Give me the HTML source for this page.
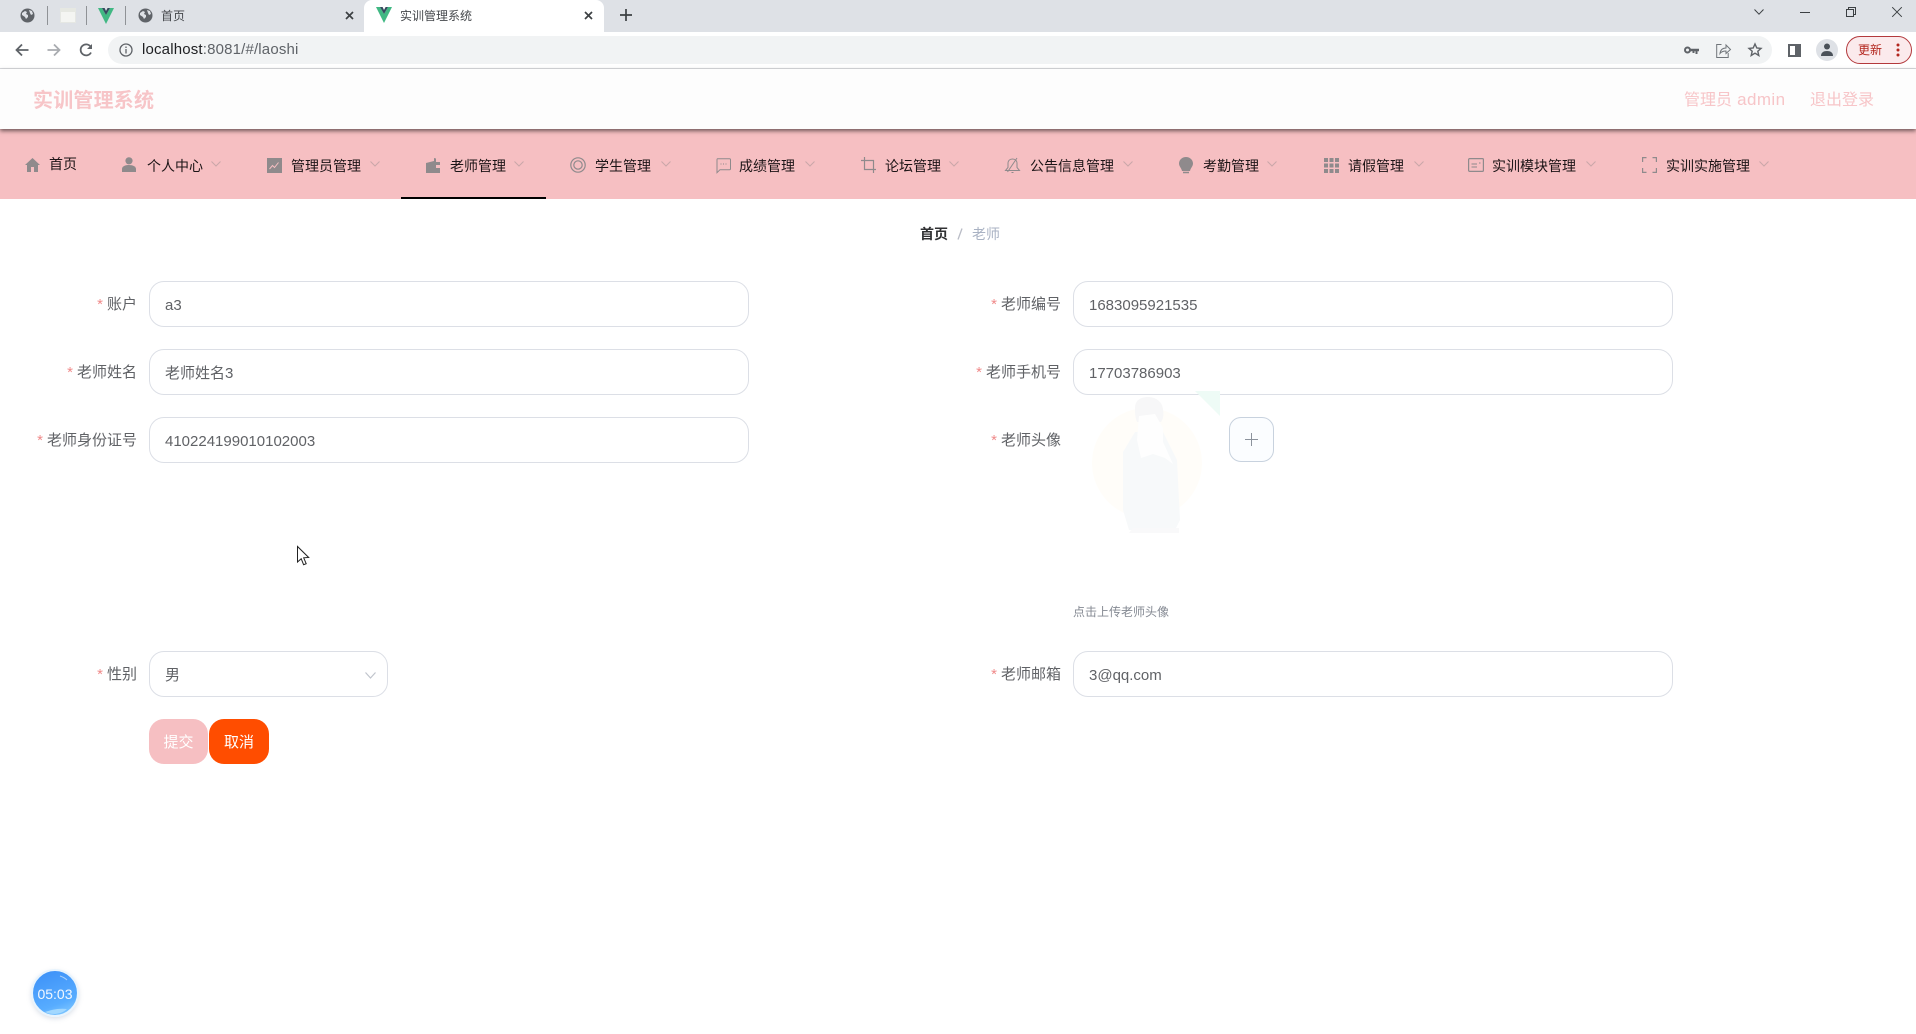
<!DOCTYPE html>
<html lang="zh-CN">
<head>
<meta charset="utf-8">
<title>实训管理系统</title>
<style>
*{box-sizing:border-box;margin:0;padding:0}
html,body{width:1916px;height:1034px;overflow:hidden;background:#fff}
body{position:relative;font-family:"Liberation Sans","Noto Sans CJK SC",sans-serif;font-size:14px;color:#606266}
.a{position:absolute;white-space:nowrap}
svg{position:absolute;display:block;overflow:visible}
.navt{position:absolute;top:155px;line-height:22px;font-size:14px;color:#1c1416;white-space:nowrap}
.lab{position:absolute;right:1779px;line-height:22px;white-space:nowrap;color:#606266;font-size:15px}
.lab2{position:absolute;right:855px;line-height:22px;white-space:nowrap;color:#606266;font-size:15px}
.lab i,.lab2 i{font-style:normal;color:#f08a8a;margin-right:4px}
.inp{position:absolute;height:46px;border:1px solid #dcdfe6;border-radius:15px;background:#fff;line-height:45px;padding:1px 0 0 15px;color:#606266;font-size:15px;white-space:nowrap}
</style>
</head>
<body>
<!-- browser chrome -->
<div class="a" style="left:0;top:0;width:1916px;height:32px;background:#dee1e6"></div>
<div class="a" style="left:0;top:32px;width:1916px;height:36px;background:#fff"></div>
<div class="a" style="left:0;top:68px;width:1916px;height:1px;background:#dadce0"></div>
<div class="a" style="left:364px;top:0;width:240px;height:32px;background:#fff;border-radius:8px 8px 0 0"></div>
<div class="a" style="left:47px;top:6px;width:1px;height:19px;background:#8f9296"></div>
<div class="a" style="left:86px;top:6px;width:1px;height:19px;background:#8f9296"></div>
<div class="a" style="left:125px;top:6px;width:1px;height:19px;background:#8f9296"></div>
<svg style="left:20px;top:8px" width="15" height="15" viewBox="0 0 15 15"><circle cx="7.5" cy="7.5" r="7" fill="#5f6368"/><path d="M2 5l3-2 2 1-1 2 2 1v2l-2 2-1-2-3-2zM9 2l3 1 1 3-2 1-1-2z" fill="#dee1e6"/></svg>
<div class="a" style="left:60px;top:8px;width:16px;height:15px;background:#f4f5f2;border:1px solid #e5e7e3;border-top:4px solid #e6e8e2"></div>
<svg style="left:98px;top:8px" width="16" height="16" viewBox="0 0 16 16"><path d="M0 0h4l4 7 4-7h4L8 16z" fill="#41b883"/><path d="M4 0h2.600L8 3l1.600-3H12L8 7z" fill="#35495e"/></svg>
<svg style="left:138px;top:8px" width="15" height="15" viewBox="0 0 15 15"><circle cx="7.5" cy="7.5" r="7" fill="#5f6368"/><path d="M2 5l3-2 2 1-1 2 2 1v2l-2 2-1-2-3-2zM9 2l3 1 1 3-2 1-1-2z" fill="#dee1e6"/></svg>
<div class="a" style="left:161px;top:7px;font-size:12px;line-height:18px;color:#45484c">首页</div>
<svg style="left:345px;top:11px" width="9" height="9" viewBox="0 0 9 9"><path d="M1 1l7 7M8 1L1 8" stroke="#3c4043" stroke-width="1.700" fill="none"/></svg>
<svg style="left:376px;top:7px" width="16" height="16" viewBox="0 0 16 16"><path d="M0 0h4l4 7 4-7h4L8 16z" fill="#41b883"/><path d="M4 0h2.600L8 3l1.600-3H12L8 7z" fill="#35495e"/></svg>
<div class="a" style="left:400px;top:7px;font-size:12px;line-height:18px;color:#45484c">实训管理系统</div>
<svg style="left:584px;top:11px" width="9" height="9" viewBox="0 0 9 9"><path d="M1 1l7 7M8 1L1 8" stroke="#3c4043" stroke-width="1.700" fill="none"/></svg>
<svg style="left:620px;top:9px" width="12" height="12" viewBox="0 0 12 12"><path d="M6 0v12M0 6h12" stroke="#3c4043" stroke-width="1.700" fill="none"/></svg>
<svg style="left:1754px;top:9px" width="10" height="6" viewBox="0 0 10 6"><path d="M.5.500L5 5.200 9.500.500" stroke="#3c4043" fill="none"/></svg>
<div class="a" style="left:1800px;top:12px;width:10px;height:1px;background:#3c4043"></div>
<svg style="left:1846px;top:7px" width="10" height="10" viewBox="0 0 10 10"><path d="M.5 2.500h7v7h-7zM2.500 2.500v-2h7v7h-2" stroke="#3c4043" fill="none"/></svg>
<svg style="left:1892px;top:7px" width="10" height="10" viewBox="0 0 10 10"><path d="M.2.200l9.600 9.600M9.800.200L.2 9.800" stroke="#3c4043" fill="none"/></svg>

<svg style="left:15px;top:43px" width="14" height="14" viewBox="0 0 14 14"><path d="M13.500 7H1.500M7 1.500L1.500 7 7 12.500" stroke="#5f6368" stroke-width="1.800" fill="none"/></svg>
<svg style="left:47px;top:43px" width="14" height="14" viewBox="0 0 14 14"><path d="M.5 7h12M7 1.500L12.500 7 7 12.500" stroke="#a9acb0" stroke-width="1.800" fill="none"/></svg>
<svg style="left:79px;top:43px" width="14" height="14" viewBox="0 0 14 14"><path d="M12 9.500A5.500 5.500 0 1 1 11.500 3.500" stroke="#5f6368" stroke-width="1.800" fill="none"/><path d="M13 1v5H8z" fill="#5f6368"/></svg>
<div class="a" style="left:108px;top:36px;width:1664px;height:28px;border-radius:14px;background:#f1f3f4"></div>
<svg style="left:119px;top:43px" width="14" height="14" viewBox="0 0 14 14"><circle cx="7" cy="7" r="6" stroke="#5f6368" stroke-width="1.300" fill="none"/><path d="M7 6v4.500M7 3.500v1.500" stroke="#5f6368" stroke-width="1.300"/></svg>
<div class="a" style="left:142px;top:40px;font-size:15px;line-height:20px;letter-spacing:.17px;color:#5f6368"><span style="color:#202124">localhost</span>:8081/#/laoshi</div>
<svg style="left:1684px;top:46px" width="15" height="9" viewBox="0 0 15 9"><circle cx="3.500" cy="4" r="2.500" stroke="#5f6368" stroke-width="2" fill="none"/><path d="M6 2.800h9v2.400h-1.500V8h-2V5.200h-1V7H8.500V5.200H6z" fill="#5f6368"/></svg>
<svg style="left:1716px;top:43px" width="15" height="15" viewBox="0 0 15 15"><path d="M5.500 1.500H.7v13h11.500V10" stroke="#70757a" fill="none"/><path d="M4 10.500C4.500 6.500 7 5 10 5V2l4.500 4.500L10 10.500V8c-2.500 0-4.500.5-6 2.500z" stroke="#70757a" fill="none"/></svg>
<svg style="left:1748px;top:43px" width="14" height="14" viewBox="0 0 14 14"><path d="M7 1l1.800 4 4.200.4-3.200 2.800 1 4.300L7 10.200 3.200 12.500l1-4.300L1 5.400 5.200 5z" stroke="#5f6368" stroke-width="1.400" fill="none"/></svg>
<div class="a" style="left:1788px;top:44px;width:13px;height:13px;border:2px solid #5f6368;border-right-width:6px;background:#fff"></div>
<div class="a" style="left:1816px;top:39px;width:22px;height:22px;border-radius:50%;background:#dee1e6"></div>
<svg style="left:1821px;top:43px" width="12" height="13" viewBox="0 0 12 13"><circle cx="6" cy="3.500" r="3" fill="#4a5159"/><path d="M0 13c0-3.500 2.500-5 6-5s6 1.500 6 5z" fill="#4a5159"/></svg>
<div class="a" style="left:1846px;top:36px;width:66px;height:28px;border:1px solid #b3393c;border-radius:14px;background:#fbeaec"></div>
<div class="a" style="left:1858px;top:41px;font-size:12px;line-height:18px;color:#b3261e">更新</div>
<svg style="left:1896px;top:43px" width="4" height="14" viewBox="0 0 4 14"><circle cx="2" cy="2" r="1.500" fill="#b3261e"/><circle cx="2" cy="7" r="1.500" fill="#b3261e"/><circle cx="2" cy="12" r="1.500" fill="#b3261e"/></svg>

<!-- header -->
<div class="a" style="left:0;top:69px;width:1916px;height:60px;background:#fdfdfd;box-shadow:0 2px 4px rgba(40,30,30,.65);z-index:2"></div>
<div class="a" style="left:33px;top:87px;font-size:20px;letter-spacing:.2px;font-weight:700;line-height:28px;color:#f7c5c8;z-index:3">实训管理系统</div>
<div class="a" style="left:1684px;top:88px;font-size:16px;line-height:24px;color:#f7c5c8;z-index:3">管理员<span style="font-size:17px;letter-spacing:.4px"> admin</span></div>
<div class="a" style="left:1810px;top:89px;font-size:16px;line-height:24px;color:#f7c5c8;z-index:3">退出登录</div>

<!-- nav -->
<div class="a" style="left:0;top:129px;width:1916px;height:70px;background:#f6bfc2"></div>
<div class="a" style="left:401px;top:197px;width:145px;height:2px;background:#000"></div>

<svg style="left:25px;top:158px" width="15" height="14" viewBox="0 0 15 14"><path d="M7.500 0L15 7h-2v7H9V9H6v5H2V7H0z" fill="#8f8a8c"/></svg>
<div class="navt" style="left:49px;top:153px">首页</div>

<svg style="left:122px;top:157px" width="14" height="15" viewBox="0 0 14 15"><circle cx="7" cy="3.800" r="3.600" fill="#8f8a8c"/><path d="M0 15v-3c0-2.500 3-4 7-4s7 1.500 7 4v3z" fill="#8f8a8c"/></svg>
<div class="navt" style="left:147px">个人中心</div>
<svg style="left:211px;top:161px" width="10" height="6" viewBox="0 0 10 6"><path d="M.5.500L5 5 9.500.500" stroke="#c9a6a9" fill="none"/></svg>

<svg style="left:267px;top:158px" width="15" height="15" viewBox="0 0 15 15"><rect width="15" height="15" fill="#8f8a8c"/><path d="M2.500 11l3-3.500 2 2 4-5" stroke="#f6bfc2" fill="none"/></svg>
<div class="navt" style="left:291px">管理员管理</div>
<svg style="left:370px;top:161px" width="10" height="6" viewBox="0 0 10 6"><path d="M.5.500L5 5 9.500.500" stroke="#c9a6a9" fill="none"/></svg>

<svg style="left:426px;top:158px" width="14" height="15" viewBox="0 0 14 15"><path d="M0 5l8-2V0l2 .500V4h4v11H0z" fill="#8f8a8c"/><rect x="10" y="7" width="4" height="3" fill="#f6bfc2"/></svg>
<div class="navt" style="left:450px">老师管理</div>
<svg style="left:514px;top:161px" width="10" height="6" viewBox="0 0 10 6"><path d="M.5.500L5 5 9.500.500" stroke="#c9a6a9" fill="none"/></svg>

<svg style="left:570px;top:157px" width="16" height="16" viewBox="0 0 16 16"><circle cx="8" cy="8" r="7.200" stroke="#8f8a8c" stroke-width="1.200" fill="none"/><circle cx="8" cy="8" r="4.200" stroke="#8f8a8c" stroke-width="1.200" fill="none"/></svg>
<div class="navt" style="left:595px">学生管理</div>
<svg style="left:661px;top:161px" width="10" height="6" viewBox="0 0 10 6"><path d="M.5.500L5 5 9.500.500" stroke="#c9a6a9" fill="none"/></svg>

<svg style="left:716px;top:158px" width="15" height="15" viewBox="0 0 15 15"><path d="M1.500.700h12a1 1 0 0 1 1 1v9a1 1 0 0 1-1 1H4l-3 3V1.700a1 1 0 0 1 .5-1z" stroke="#8f8a8c" fill="none"/><path d="M4.500 6h1M7 6h1M9.500 6h1" stroke="#8f8a8c"/></svg>
<div class="navt" style="left:739px">成绩管理</div>
<svg style="left:805px;top:161px" width="10" height="6" viewBox="0 0 10 6"><path d="M.5.500L5 5 9.500.500" stroke="#c9a6a9" fill="none"/></svg>

<svg style="left:861px;top:157px" width="15" height="16" viewBox="0 0 15 16"><path d="M3.500 0v12.500H15M0 3.500h12.500V16" stroke="#8f8a8c" stroke-width="1.200" fill="none"/></svg>
<div class="navt" style="left:885px">论坛管理</div>
<svg style="left:949px;top:161px" width="10" height="6" viewBox="0 0 10 6"><path d="M.5.500L5 5 9.500.500" stroke="#c9a6a9" fill="none"/></svg>

<svg style="left:1005px;top:157px" width="15" height="16" viewBox="0 0 15 16"><path d="M.5 13.500h14l-2.500-3V6.500C12 3.500 10 2 7.500 2S3 3.500 3 6.500v4zM12 1L2.500 15M6.500 15.500h2" stroke="#8f8a8c" fill="none"/></svg>
<div class="navt" style="left:1030px">公告信息管理</div>
<svg style="left:1123px;top:161px" width="10" height="6" viewBox="0 0 10 6"><path d="M.5.500L5 5 9.500.500" stroke="#c9a6a9" fill="none"/></svg>

<svg style="left:1179px;top:157px" width="14" height="17" viewBox="0 0 14 17"><path d="M7 0c4 0 7 3 7 6.500 0 3-2.500 4.500-3 7.500H3C2.500 11 0 9.500 0 6.500 0 3 3 0 7 0z" fill="#8f8a8c"/><path d="M4 15.500h6" stroke="#8f8a8c" stroke-width="1.500"/></svg>
<div class="navt" style="left:1203px">考勤管理</div>
<svg style="left:1267px;top:161px" width="10" height="6" viewBox="0 0 10 6"><path d="M.5.500L5 5 9.500.500" stroke="#c9a6a9" fill="none"/></svg>

<svg style="left:1324px;top:158px" width="15" height="15" viewBox="0 0 15 15" fill="#8f8a8c"><path d="M0 0h4v4H0zM5.500 0h4v4h-4zM11 0h4v4h-4zM0 5.500h4v4H0zM5.500 5.500h4v4h-4zM11 5.500h4v4h-4zM0 11h4v4H0zM5.500 11h4v4h-4zM11 11h4v4h-4z"/></svg>
<div class="navt" style="left:1348px">请假管理</div>
<svg style="left:1414px;top:161px" width="10" height="6" viewBox="0 0 10 6"><path d="M.5.500L5 5 9.500.500" stroke="#c9a6a9" fill="none"/></svg>

<svg style="left:1468px;top:158px" width="16" height="14" viewBox="0 0 16 14"><rect x=".6" y=".6" width="14.800" height="12.800" rx="1" stroke="#8f8a8c" stroke-width="1.200" fill="none"/><path d="M3.500 6H9M3.500 9H9M11 5h1.500" stroke="#8f8a8c"/></svg>
<div class="navt" style="left:1492px">实训模块管理</div>
<svg style="left:1586px;top:161px" width="10" height="6" viewBox="0 0 10 6"><path d="M.5.500L5 5 9.500.500" stroke="#c9a6a9" fill="none"/></svg>

<svg style="left:1642px;top:157px" width="15" height="16" viewBox="0 0 15 16"><path d="M.6 5V.6H4.500M10.500.6h3.900V5M14.400 11v4.400h-3.900M4.500 15.400H.6V11" stroke="#8f8a8c" stroke-width="1.200" fill="none"/></svg>
<div class="navt" style="left:1666px">实训实施管理</div>
<svg style="left:1759px;top:161px" width="10" height="6" viewBox="0 0 10 6"><path d="M.5.500L5 5 9.500.500" stroke="#c9a6a9" fill="none"/></svg>

<!-- breadcrumb -->
<div class="a" style="left:920px;top:223px;line-height:22px;font-weight:700;color:#303133">首页</div>
<svg style="left:957px;top:228px" width="6" height="12" viewBox="0 0 6 12"><path d="M5 .5L1 11.500" stroke="#b9bcc6" stroke-width="1.300" fill="none"/></svg>
<div class="a" style="left:972px;top:223px;line-height:22px;color:#a9b2c3">老师</div>

<!-- form left -->
<div class="lab" style="top:294px"><i>*</i>账户</div>
<div class="inp" style="left:149px;top:281px;width:600px">a3</div>
<div class="lab" style="top:362px"><i>*</i>老师姓名</div>
<div class="inp" style="left:149px;top:349px;width:600px">老师姓名3</div>
<div class="lab" style="top:430px"><i>*</i>老师身份证号</div>
<div class="inp" style="left:149px;top:417px;width:600px">410224199010102003</div>
<div class="lab" style="top:664px"><i>*</i>性别</div>
<div class="inp" style="left:149px;top:651px;width:239px">男</div>
<svg style="left:365px;top:672px" width="11" height="7" viewBox="0 0 11 7"><path d="M.5.500L5.500 6l5-5.500" stroke="#c0c4cc" stroke-width="1.200" fill="none"/></svg>
<div class="a" style="left:149px;top:719px;width:59px;height:45px;border-radius:15px;background:#f6bfc2;color:#fff;text-align:center;line-height:45px;padding-top:1px;font-size:15px">提交</div>
<div class="a" style="left:209px;top:719px;width:60px;height:45px;border-radius:15px;background:#ff4d00;color:#fff;text-align:center;line-height:45px;padding-top:1px;font-size:15px">取消</div>

<!-- form right -->
<div class="lab2" style="top:294px"><i>*</i>老师编号</div>
<div class="inp" style="left:1073px;top:281px;width:600px">1683095921535</div>
<div class="lab2" style="top:362px"><i>*</i>老师手机号</div>
<div class="inp" style="left:1073px;top:349px;width:600px">17703786903</div>
<div class="lab2" style="top:430px"><i>*</i>老师头像</div>
<svg style="left:1073px;top:390px" width="148" height="148" viewBox="0 0 148 148">
<path d="M122 1h25v25z" fill="#eefbf6"/>
<circle cx="74" cy="73" r="55" fill="#fffdf9"/>
<path d="M50 62l12-20 28 0 14 28 3 60-5 10H56l-6-20z" fill="#f7f9fa"/>
<path d="M62 18c0-8 6-11 13-11s14 4 15 12c1 7 0 10-2 13H64c-2-5-2-9-2-14z" fill="#f7f7f8"/>
<path d="M66 26l16-2 8 14 0 14 10 22-8-6-12-4-12 4-4-18z" fill="#fefefe"/>
<path d="M60 138h46v5H56z" fill="#f9f9fa"/>
</svg>
<div class="a" style="left:1229px;top:417px;width:45px;height:45px;border:1px solid #c8d2de;border-radius:12px;background:#fbfdff"></div>
<svg style="left:1245px;top:433px" width="13" height="13" viewBox="0 0 13 13"><path d="M6.500 0v13M0 6.500h13" stroke="#8c939d" fill="none"/></svg>
<div class="a" style="left:1073px;top:603px;font-size:12px;line-height:18px;color:#858a93">点击上传老师头像</div>
<div class="lab2" style="top:664px"><i>*</i>老师邮箱</div>
<div class="inp" style="left:1073px;top:651px;width:600px">3@qq.com</div>

<!-- timer -->
<div class="a" style="left:31px;top:969px;width:48px;height:48px;border-radius:50%;background:linear-gradient(160deg,#3b8ff7,#57acff 70%,#8dd0ff);border:2px solid #e8f4fd;box-shadow:0 2px 5px rgba(120,140,170,.25);overflow:hidden;color:#f2f8ff;text-align:center;line-height:45px;padding-top:1px;font-size:14px">05:03</div>
<svg style="left:33px;top:971px" width="44" height="44" viewBox="0 0 44 44"><path d="M27 5c3 1 5 2 7 4" stroke="#a8d0fb" stroke-width="1" fill="none"/><path d="M12 41c6-2 13-4 22-3-3 3-7 4.500-12 5-4 0-7-.5-10-2z" fill="#a2d8ff"/></svg>

<!-- cursor -->
<svg style="left:297px;top:546px" width="12" height="20" viewBox="0 0 12 20"><path d="M.5.500v15.500l3.700-3.300 2.400 6 2.600-1-2.500-5.900 5-.3z" fill="#fff" stroke="#222" stroke-width="1"/></svg>
</body>
</html>
